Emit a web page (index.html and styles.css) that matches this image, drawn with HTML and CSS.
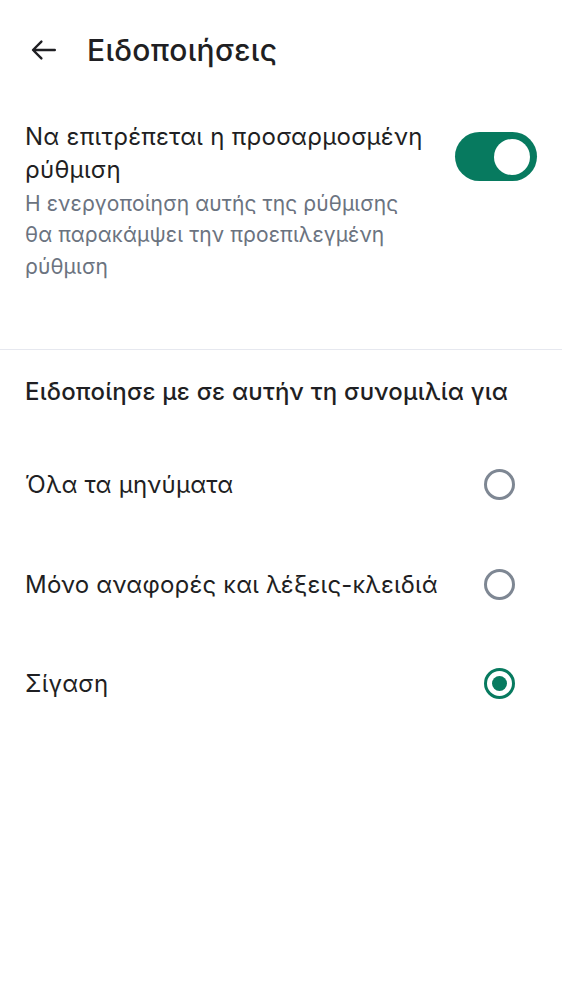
FILE: index.html
```html
<!DOCTYPE html>
<html lang="el">
<head>
<meta charset="utf-8">
<link rel="stylesheet" href="styles.css">
</head>
<body>
<div class="page">
  <header class="topbar">
    <button class="back" aria-label="Πίσω">
      <svg width="26" height="24" viewBox="0 0 26 24"><path d="M23.8 12H2.2M10.4 3.6L2 12l8.4 8.4" fill="none" stroke="#1f1f23" stroke-width="2.4" stroke-linecap="round" stroke-linejoin="round"/></svg>
    </button>
    <h1 class="title">Ειδοποιήσεις</h1>
  </header>

  <section class="custom">
    <div class="custom-text">
      <div class="custom-label">Να επιτρέπεται η προσαρμοσμένη ρύθμιση</div>
      <div class="custom-desc">Η ενεργοποίηση αυτής της ρύθμισης θα παρακάμψει την προεπιλεγμένη ρύθμιση</div>
    </div>
    <div class="switch on"><span class="knob"></span></div>
  </section>

  <hr class="divider">

  <h2 class="section-title">Ειδοποίησε με σε αυτήν τη συνομιλία για</h2>

  <ul class="options">
    <li class="option"><span class="option-label">Όλα τα μηνύματα</span><span class="radio"></span></li>
    <li class="option"><span class="option-label">Μόνο αναφορές και λέξεις-κλειδιά</span><span class="radio"></span></li>
    <li class="option"><span class="option-label">Σίγαση</span><span class="radio checked"></span></li>
  </ul>
</div>
</body>
</html>
```

FILE: styles.css
```css
* { box-sizing: border-box; }
html, body { margin: 0; padding: 0; background: #fff; }
body { font-family: Inter, Roboto, "Noto Sans", sans-serif; color: #1f1f23; }
.page { width: 562px; }

.topbar { display: flex; align-items: center; height: 100px; padding-left: 31px; }
.back { background: none; border: 0; padding: 0; width: 26px; height: 24px; display: flex; align-items: center; justify-content: center; }
.title { margin: 0 0 0 30px; font-size: 30px; font-weight: 500; letter-spacing: 0.3px; }

.custom { display: flex; justify-content: space-between; align-items: flex-start; padding: 20px 25px 0 25px; }
.custom-text { width: 405px; }
.custom-label { font-size: 24px; line-height: 33px; letter-spacing: 0.27px; }
.custom-desc { font-size: 21px; line-height: 31.5px; letter-spacing: 0.1px; color: #6b7380; margin-top: 1.5px; }
.switch { width: 82px; height: 49px; border-radius: 25px; background: #077a5f; margin-top: 12px; flex-shrink: 0; display: flex; align-items: center; justify-content: flex-end; padding-right: 7px; }
.switch .knob { width: 36px; height: 36px; border-radius: 50%; background: #fff; }

.divider { border: 0; border-top: 1px solid #e6e8ef; margin: 67px 0 0 0; }

.section-title { margin: 0; padding: 26px 25px 0; font-size: 24px; font-weight: 500; line-height: 32px; letter-spacing: 0.2px; }

.options { list-style: none; margin: 27px 0 0; padding: 0; }
.option { display: flex; align-items: center; justify-content: space-between; height: 99.5px; padding: 0 47px 0 25px; font-size: 24px; letter-spacing: 0.2px; }
.radio { width: 31px; height: 31px; border-radius: 50%; border: 3px solid #7e8793; display: flex; align-items: center; justify-content: center; }
.radio.checked { border-color: #077a5f; }
.radio.checked::after { content: ""; width: 15px; height: 15px; border-radius: 50%; background: #077a5f; }
```
